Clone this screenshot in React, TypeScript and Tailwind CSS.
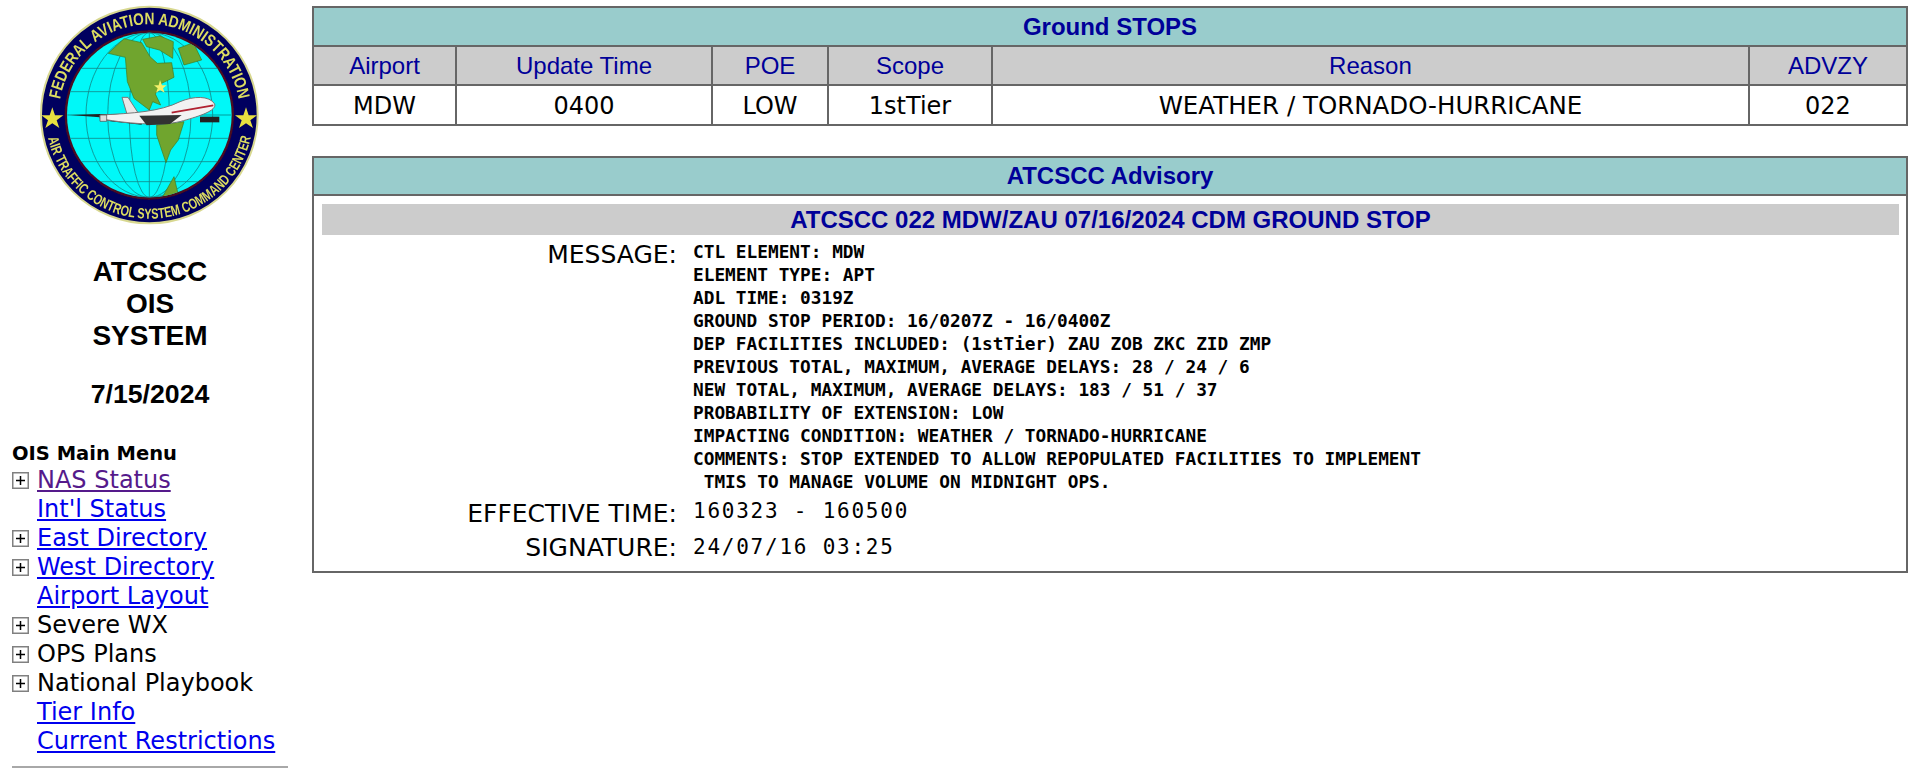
import React from "react";

const menu = [
  { label: "NAS Status", plus: true, link: true, visited: true },
  { label: "Int'l Status", plus: false, link: true },
  { label: "East Directory", plus: true, link: true },
  { label: "West Directory", plus: true, link: true },
  { label: "Airport Layout", plus: false, link: true },
  { label: "Severe WX", plus: true, link: false },
  { label: "OPS Plans", plus: true, link: false },
  { label: "National Playbook", plus: true, link: false },
  { label: "Tier Info", plus: false, link: true },
  { label: "Current Restrictions", plus: false, link: true },
];

const columns = [
  { name: "Airport", value: "MDW", width: "w-[143px]", size: "text-[24px]" },
  { name: "Update Time", value: "0400", width: "w-[256px]", size: "text-[24px]" },
  { name: "POE", value: "LOW", width: "w-[116px]", size: "text-[24px]" },
  { name: "Scope", value: "1stTier", width: "w-[164px]", size: "text-[24px]" },
  { name: "Reason", value: "WEATHER / TORNADO-HURRICANE", width: "", size: "text-[24.5px]" },
  { name: "ADVZY", value: "022", width: "w-[158px]", size: "text-[24px]" },
];

const message = `CTL ELEMENT: MDW
ELEMENT TYPE: APT
ADL TIME: 0319Z
GROUND STOP PERIOD: 16/0207Z - 16/0400Z
DEP FACILITIES INCLUDED: (1stTier) ZAU ZOB ZKC ZID ZMP
PREVIOUS TOTAL, MAXIMUM, AVERAGE DELAYS: 28 / 24 / 6
NEW TOTAL, MAXIMUM, AVERAGE DELAYS: 183 / 51 / 37
PROBABILITY OF EXTENSION: LOW
IMPACTING CONDITION: WEATHER / TORNADO-HURRICANE
COMMENTS: STOP EXTENDED TO ALLOW REPOPULATED FACILITIES TO IMPLEMENT
 TMIS TO MANAGE VOLUME ON MIDNIGHT OPS.`;

function Logo() {
  return (
    <svg viewBox="0 0 900 720" className="block w-[300px] h-[240px]">
      <defs>
        <filter id="soft">
          <feGaussianBlur stdDeviation="1.6" />
        </filter>
        <clipPath id="globe">
          <circle cx="448" cy="345" r="247" />
        </clipPath>
        <path id="topArc" d="M176 345 A272 272 0 0 1 720 345" />
        <path id="bottomArc" d="M143 410 A312 312 0 0 0 753 410" />
      </defs>
      <g filter="url(#soft)">
        <circle cx="448" cy="345" r="325" fill="#00005e" stroke="#d8d890" strokeWidth="6" />
        <circle cx="448" cy="345" r="254" fill="#4a0a20" />
        <circle cx="448" cy="345" r="247" fill="#00f8f8" />
        <g clipPath="url(#globe)">
          <g fill="none" stroke="#108a8a" strokeWidth="2.5">
            <path d="M200 205H700M200 275H700M200 345H700M200 415H700M200 485H700M200 545H700" />
            <ellipse cx="448" cy="345" rx="60" ry="247" />
            <ellipse cx="448" cy="345" rx="125" ry="247" />
            <ellipse cx="448" cy="345" rx="190" ry="247" />
            <path d="M448 98V592" />
          </g>
          <g fill="#6fa52e" stroke="#3f7a20" strokeWidth="2">
            <path d="M325 160L372 116L425 128L450 170L472 190L515 188L522 232L485 250L466 282L482 315L458 305L448 330L402 295L382 245L376 172Z" />
            <path d="M428 118L480 108L520 125L518 175L478 150L440 140Z" />
            <path d="M535 145L580 128L605 180L552 195Z" />
            <path d="M470 375L552 365L535 420L512 450L498 488L485 450L470 405Z" />
            <path d="M488 590L522 530L535 585Z" />
          </g>
        </g>
        <path d="M480 240L486 256L500 256L489 265L494 278L480 270L468 278L473 265L462 256L476 256Z" fill="#f4f06a" />
        <path d="M366 292L384 292L414 338L382 346Z" fill="#e8e8e8" stroke="#777" strokeWidth="3" />
        <path d="M210 345L300 342L430 342L425 374L330 364L300 352Z" fill="#222" />
        <path d="M300 345C400 340 480 335 540 305C580 288 628 286 644 312C650 332 600 348 550 362C500 378 400 374 300 356Z" fill="#f2f2f2" stroke="#777" strokeWidth="3" />
        <path d="M418 347L545 345L510 372L440 376Z" fill="#333" />
        <path d="M515 338L640 316" stroke="#b02030" strokeWidth="5" fill="none" />
        <path d="M600 350H658V367H600Z" fill="#222" />
        <path d="M300 345H320V364H300Z" fill="#ddd" stroke="#444" strokeWidth="2" />
        <path d="M157 322L165 346L190 346L170 361L178 384L157 370L136 384L144 361L124 346L149 346Z" fill="#e8e040" />
        <path d="M738 322L746 346L771 346L751 361L759 384L738 370L717 384L725 361L705 346L730 346Z" fill="#e8e040" />
        <text fill="#dcdc60" fontFamily="'Liberation Sans', sans-serif" fontWeight="700" fontSize="50">
          <textPath href="#topArc" startOffset="47" textLength="760" lengthAdjust="spacingAndGlyphs">FEDERAL AVIATION ADMINISTRATION</textPath>
        </text>
        <text fill="#dcdc60" fontFamily="'Liberation Sans', sans-serif" fontWeight="700" fontSize="44">
          <textPath href="#bottomArc" startOffset="4" textLength="842" lengthAdjust="spacingAndGlyphs">AIR TRAFFIC CONTROL SYSTEM COMMAND CENTER</textPath>
        </text>
      </g>
    </svg>
  );
}

function PlusBox() {
  return (
    <svg viewBox="0 0 17 17" className="block w-[17px] h-[17px]">
      <rect x="0.75" y="0.75" width="15.5" height="15.5" fill="#fff" stroke="#808080" strokeWidth="1.5" />
      <path d="M4 8.5H13M8.5 4V13" stroke="#000" strokeWidth="1.5" />
    </svg>
  );
}

function Sidebar() {
  return (
    <aside className="w-[300px] shrink-0 font-['DejaVu_Sans',sans-serif]">
      <Logo />
      <div className="mt-[16px] text-center font-['Liberation_Sans',sans-serif] font-bold text-[28px] leading-[32px] text-black">
        <div>ATCSCC</div>
        <div>OIS</div>
        <div>SYSTEM</div>
        <div className="mt-[26px] text-[26.67px]">7/15/2024</div>
      </div>
      <div className="mt-[32px] pl-[12px] font-bold text-[19.5px] leading-[24px] text-black">OIS Main Menu</div>
      <ul className="pl-[12px]">
        {menu.map((item) => (
          <li key={item.label} className="flex items-center h-[29px] text-[24px] leading-[29px]">
            <span className="w-[25px] shrink-0">{item.plus && <PlusBox />}</span>
            {item.link ? (
              <a href="#" className={`underline ${item.visited ? "text-[#551a8b]" : "text-[#0000ee]"}`}>
                {item.label}
              </a>
            ) : (
              <span className="text-black">{item.label}</span>
            )}
          </li>
        ))}
      </ul>
      <hr className="mt-[10px] ml-[12px] w-[276px] border-t-2 border-[#a8a8a8]" />
    </aside>
  );
}

function GroundStops() {
  return (
    <table className="w-full table-fixed border-collapse border-2 border-[#666666] text-center">
      <colgroup>
        {columns.map((c) => (
          <col key={c.name} className={c.width} />
        ))}
      </colgroup>
      <thead>
        <tr>
          <th colSpan={6} className="h-[39px] bg-[#99cccc] border-2 border-[#666666] p-0 font-['Liberation_Sans',sans-serif] font-bold text-[24px] text-[#000099]">
            Ground STOPS
          </th>
        </tr>
        <tr>
          {columns.map((c) => (
            <th key={c.name} className="h-[39px] bg-[#cccccc] border-2 border-[#666666] p-0 font-['Liberation_Sans',sans-serif] font-normal text-[24px] text-[#000099]">
              {c.name}
            </th>
          ))}
        </tr>
      </thead>
      <tbody>
        <tr>
          {columns.map((c) => (
            <td key={c.name} className={`h-[40px] border-2 border-[#666666] p-0 pt-[2px] leading-[30px] font-['DejaVu_Sans',sans-serif] ${c.size} text-black`}>
              {c.value}
            </td>
          ))}
        </tr>
      </tbody>
    </table>
  );
}

function Advisory() {
  return (
    <section className="mt-[30px] border-2 border-[#666666]">
      <div className="flex items-center justify-center h-[38px] bg-[#99cccc] border-b-2 border-[#666666] font-['Liberation_Sans',sans-serif] font-bold text-[24px] text-[#000099]">
        ATCSCC Advisory
      </div>
      <div className="pl-[8px] pr-[7px] pt-[8px] pb-[5px]">
        <div className="flex items-center justify-center h-[31px] bg-[#cccccc] font-['Liberation_Sans',sans-serif] font-bold text-[24px] text-[#000099]">
          ATCSCC 022 MDW/ZAU 07/16/2024 CDM GROUND STOP
        </div>
        <div className="mt-[4px] grid grid-cols-[355px_1fr] gap-x-[16px] text-black">
          <div className="mt-[1px] text-right font-['DejaVu_Sans',sans-serif] text-[25px] leading-[30px]">MESSAGE:</div>
          <pre className="font-['DejaVu_Sans_Mono',monospace] font-bold text-[17.8px] leading-[23px] pt-[1px]">{message}</pre>
          <div className="mt-[4px] text-right font-['DejaVu_Sans',sans-serif] text-[25px] leading-[33px]">EFFECTIVE TIME:</div>
          <div className="mt-[3px] font-['DejaVu_Sans_Mono',monospace] text-[21px] tracking-[1.76px] leading-[30px]">160323 - 160500</div>
          <div className="text-right font-['DejaVu_Sans',sans-serif] text-[25px] leading-[36px]">SIGNATURE:</div>
          <div className="font-['DejaVu_Sans_Mono',monospace] text-[21px] tracking-[1.76px] leading-[34px]">24/07/16 03:25</div>
        </div>
      </div>
    </section>
  );
}

export default function App() {
  return (
    <div className="flex bg-white min-h-[784px]">
      <Sidebar />
      <main className="flex-1 pl-[12px] pr-[11px] pt-[6px]">
        <GroundStops />
        <Advisory />
      </main>
    </div>
  );
}
